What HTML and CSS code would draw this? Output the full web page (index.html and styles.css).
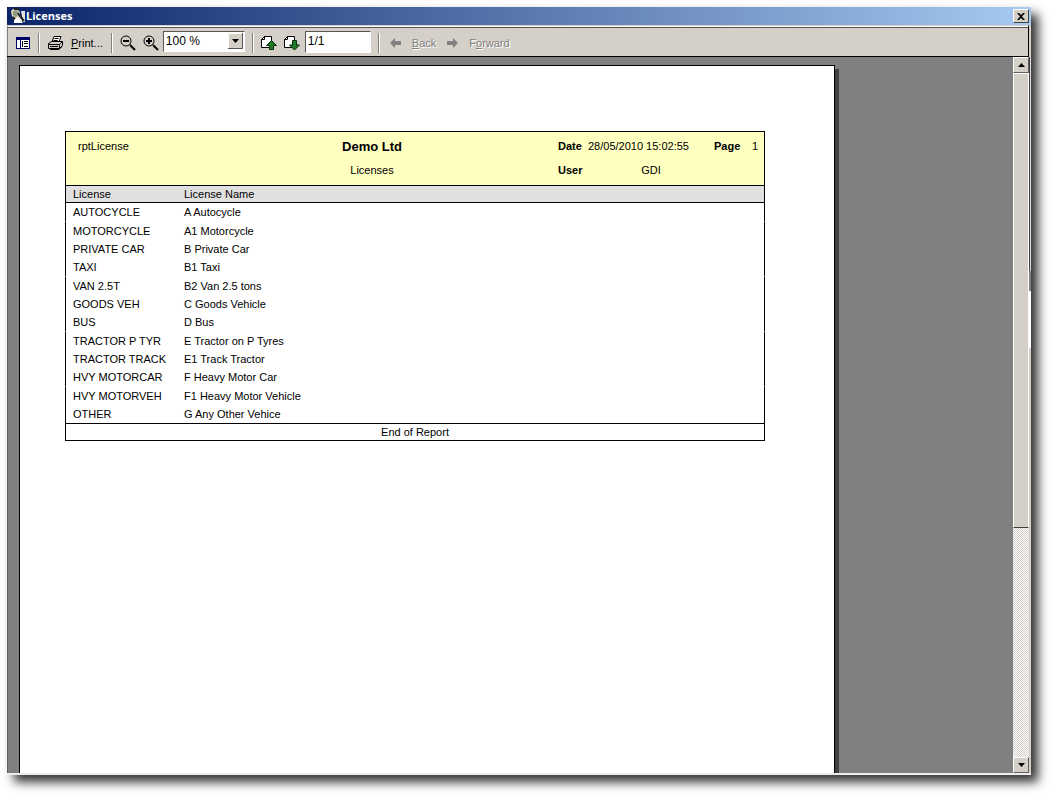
FILE: index.html
```html
<!DOCTYPE html>
<html lang="en">
<head>
<meta charset="utf-8">
<title>Licenses</title>
<link rel="stylesheet" href="styles.css">
</head>
<body>
<main class="window">
  <header class="titlebar">
    <svg class="app-icon" width="16" height="16" viewBox="0 0 16 16"><path d="M1 4q0-2 2-3h4l3 3v3H8l4 5v3H4v-4L2 8z" fill="#d9d6b5"/><path d="M3 3l4-1 2 4-3 3-3-2z" fill="#8f9a80"/><path d="M11 3h4v11h-2z" fill="#e4e4dc"/><path d="M5 10h4l4 5H4z" fill="#fff"/><path d="M4 1h5M8 5l6 8M3 9l2 2" stroke="#222" stroke-width="2"/></svg>
    <h1 class="title">Licenses</h1>
    <button class="close" aria-label="Close"><svg width="8" height="7" viewBox="0 0 8 7"><path d="M0 0h2l2 2 2-2h2L5 3.500 8 7H6L4 5 2 7H0l3-3.500z"/></svg></button>
  </header>
  <div class="toolbar">
    <button class="tool tree" aria-label="Toggle group tree"><svg width="14" height="12" viewBox="0 0 14 12"><path fill="#000066" d="M0 0h14v12H0z"/><path fill="#fff" d="M1 3h3v8H1zM5 3h8v8H5z"/><path fill="#000" d="M6 4h1v6H6zM8 4h4v1H8zM8 6h4v1H8zM8 9h4v1H8z"/></svg></button>
    <span class="sep"></span>
    <button class="tool print"><svg width="17" height="14" viewBox="0 0 17 14" fill="none" stroke="#000"><path d="M5 6l2-5.500h7L12 6M7.500 2.500h4M6.500 4.500h4" fill="#fff"/><path d="M1.500 7.500l3-2h11v4l-3 3h-11z" fill="#d4d0c8"/><path d="M1.500 8.500h11v4M12.500 8.500l3-3M3 10.500h8M3 13.500h9l3-3" /></svg><span><u>P</u>rint...</span></button>
    <span class="sep"></span>
    <button class="tool" aria-label="Zoom out"><svg width="16" height="16" viewBox="0 0 16 16" fill="none" stroke="#000"><circle cx="6" cy="6" r="5"/><path d="M3 6h6" stroke-width="2"/><path d="M10 10l5 5" stroke-width="2"/></svg></button>
    <button class="tool zoom-in" aria-label="Zoom in"><svg width="16" height="16" viewBox="0 0 16 16" fill="none" stroke="#000"><circle cx="6" cy="6" r="5"/><path d="M3 6h6M6 3v6" stroke-width="2"/><path d="M10 10l5 5" stroke-width="2"/></svg></button>
    <span class="zoom-box"><select class="zoom-select" aria-label="Zoom"><option>100 %</option></select><svg class="drop" width="15" height="16" viewBox="0 0 15 16"><path fill="#d4d0c8" d="M0 0h15v16H0z"/><path fill="none" stroke="#fff" d="M.5 15V.5H14"/><path fill="none" stroke="#555" d="M14.500 0v15.500H0"/><path d="M4 6h7L7.500 10z"/></svg></span>
    <span class="sep sep-wide"></span>
    <button class="tool" aria-label="Previous page"><svg width="16" height="16" viewBox="0 0 16 16"><path d="M3.500 1.500h7v11h-10v-8z" fill="#fff" stroke="#000"/><path d="M3.500 1.500v3h-3" fill="none" stroke="#000"/><path d="M10.500 5.500l5 5h-3v4h-4v-4h-3z" fill="#1e7a28" stroke="#062f0a"/></svg></button>
    <button class="tool next" aria-label="Next page"><svg width="16" height="16" viewBox="0 0 16 16"><path d="M3.500 1.500h7v11h-10v-8z" fill="#fff" stroke="#000"/><path d="M3.500 1.500v3h-3" fill="none" stroke="#000"/><path d="M10.500 15l5-5h-3V5.500h-4V10h-3z" fill="#1e7a28" stroke="#062f0a"/></svg></button>
    <input class="page-input" aria-label="Page" value="1/1">
    <span class="sep sep-nav"></span>
    <button class="tool nav" disabled><svg width="11" height="10" viewBox="0 0 11 10"><path d="M0 5l5-5v3h6v4H5v3z"/></svg><span><u>B</u>ack</span></button>
    <button class="tool nav" disabled><svg width="11" height="10" viewBox="0 0 11 10"><path d="M11 5L6 0v3H0v4h6v3z"/></svg><span>F<u>o</u>rward</span></button>
  </div>
  <div class="viewer">
    <div class="canvas">
      <article class="sheet">
        <section class="report">
          <header class="report-head">
            <span class="name">rptLicense</span>
            <h2 class="company">Demo Ltd</h2>
            <b>Date</b><span>28/05/2010 15:02:55</span>
            <b class="page-label">Page</b><span>1</span>
            <span class="subtitle">Licenses</span>
            <b class="user-label">User</b><span class="user">GDI</span>
          </header>
          <table class="licenses">
            <thead><tr><th>License</th><th>License Name</th></tr></thead>
            <tbody>
              <tr><td>AUTOCYCLE</td><td>A Autocycle</td></tr>
              <tr><td>MOTORCYCLE</td><td>A1 Motorcycle</td></tr>
              <tr><td>PRIVATE CAR</td><td>B Private Car</td></tr>
              <tr><td>TAXI</td><td>B1 Taxi</td></tr>
              <tr><td>VAN 2.5T</td><td>B2 Van 2.5 tons</td></tr>
              <tr><td>GOODS VEH</td><td>C Goods Vehicle</td></tr>
              <tr><td>BUS</td><td>D Bus</td></tr>
              <tr><td>TRACTOR P TYR</td><td>E Tractor on P Tyres</td></tr>
              <tr><td>TRACTOR TRACK</td><td>E1 Track Tractor</td></tr>
              <tr><td>HVY MOTORCAR</td><td>F Heavy Motor Car</td></tr>
              <tr><td>HVY MOTORVEH</td><td>F1 Heavy Motor Vehicle</td></tr>
              <tr><td>OTHER</td><td>G Any Other Vehice</td></tr>
            </tbody>
          </table>
          <footer class="report-end">End of Report</footer>
        </section>
      </article>
    </div>
    <div class="scrollbar">
      <button class="arrow" aria-label="Scroll up"><svg width="7" height="4" viewBox="0 0 7 4"><path d="M0 4h7L3.500 0z"/></svg></button>
      <div class="thumb"></div>
      <div class="track"></div>
      <button class="arrow" aria-label="Scroll down"><svg width="7" height="4" viewBox="0 0 7 4"><path d="M0 0h7L3.500 4z"/></svg></button>
    </div>
    <div class="edge"><span class="edge-top"></span><span class="edge-mark"></span><span class="edge-light"></span><span class="edge-rest"></span></div>
  </div>
</main>
</body>
</html>
```
FILE: styles.css
```css
* { box-sizing: border-box; }
body {
  margin: 0;
  height: 100vh;
  padding: 7px 23px 23px 7px;
  background: #fff;
  color: #000;
  font: 11px/14px "Liberation Sans", Arial, sans-serif;
}
button {
  margin: 0;
  padding: 0;
  border: 0;
  background: none;
  color: inherit;
  font: inherit;
}
svg { display: block; flex: none; }
.window {
  display: flex;
  flex-direction: column;
  height: 100%;
  background: #d4d0c8;
  box-shadow: 7px 7px 10px rgba(0, 0, 0, 0.8);
}
.titlebar {
  display: flex;
  align-items: center;
  flex: none;
  height: 18px;
  padding: 0 2px 0 3px;
  background: linear-gradient(to right, #0a246a, #a6caf0);
}
.title {
  flex: 1;
  margin: 0;
  color: #fff;
  font: bold 11px/16px "Open Sans", sans-serif;
}
.close {
  display: flex;
  align-items: center;
  justify-content: center;
  width: 16px;
  height: 14px;
  background: #d4d0c8;
  border: 1px solid;
  border-color: #fff #404040 #404040 #fff;
}
.toolbar {
  display: flex;
  align-items: center;
  flex: none;
  height: 32px;
  margin-right: 2px;
  padding: 3px 9px 0;
  border-top: 1px solid #d4d0c8;
  border-right: 1px solid #000;
  border-bottom: 1px solid #000;
  box-shadow: inset 1px 0 #808080, inset 0 1px #fff, inset 0 2px #555;
}
.sep {
  width: 2px;
  height: 20px;
  margin: 0 7px 0 8px;
  border-left: 1px solid #808080;
  border-right: 1px solid #fff;
}
.tool { display: flex; align-items: center; }
.print { gap: 7px; }
.zoom-in { margin-left: 7px; }
.next { margin-left: 7px; }
.zoom-box {
  display: flex;
  width: 82px;
  height: 21px;
  margin: 0 0 3px 4px;
  padding-right: 1px;
  align-items: center;
  background: #fff;
  border: 1px solid;
  border-color: #555 #fff #fff #555;
}
.zoom-select {
  flex: 1;
  min-width: 0;
  padding: 0 2px;
  appearance: none;
  background: none;
  border: 0;
  color: #000;
  font: 12px/16px "Liberation Sans", Arial, sans-serif;
}
.sep-wide { margin-left: 7px; }
.page-input {
  width: 66px;
  height: 22px;
  margin: 0 0 2px 5px;
  padding: 0 2px 2px;
  background: #fff;
  border: 1px solid;
  border-color: #555 #fff #fff #555;
  border-radius: 0;
  font: 12px/16px "Liberation Sans", Arial, sans-serif;
}
.sep-nav { margin: 0 10px 0 7px; }
.nav {
  gap: 11px;
  margin-right: 11px;
  color: #808080;
  fill: #808080;
  text-shadow: 1px 1px #fff;
}
.viewer { display: flex; flex: 1; min-height: 0; border-bottom: 2px solid #eee; }
.canvas {
  flex: 1;
  min-width: 0;
  overflow: hidden;
  padding: 8px 0 0 11px;
  background: #808080;
  border-left: 1px solid #606060;
}
.sheet {
  width: 816px;
  height: 1056px;
  padding: 65px 69px 0 45px;
  background: #fff;
  border: 1px solid #000;
  box-shadow: 4px 4px #404040;
}
.report-head {
  display: grid;
  grid-template-columns: 236px 116px minmax(0, 1fr) 30px 126px 38px 12px;
  grid-template-rows: 24px 24px;
  height: 55px;
  padding: 2px 0 0 12px;
  line-height: 24px;
  background: #ffffc0;
  border: 1px solid #000;
}
.report-head b { grid-column: 4; grid-row: 1; }
.report-head span { grid-column: 5; grid-row: 1; }
.report-head .name { grid-column: 1; }
.report-head .company {
  grid-column: 2;
  grid-row: 1;
  margin: 0;
  font-size: 13px;
  line-height: 26px;
  text-align: center;
}
.report-head .page-label { grid-column: 6; }
.report-head .page-label + span { grid-column: 7; }
.report-head .subtitle { grid-column: 2; grid-row: 2; text-align: center; }
.report-head .user-label { grid-row: 2; }
.report-head .user { grid-row: 2; text-align: center; }
.licenses { width: 100%; border-spacing: 0; table-layout: fixed; }
.licenses th, .licenses td {
  height: 18px;
  padding: 2px 0 0 7px;
  text-align: left;
  vertical-align: top;
  font-weight: normal;
  line-height: 14px;
}
.licenses th:first-child { width: 112px; }
.licenses th { height: 17px; padding-top: 1px; background: #e0e0e0; border-bottom: 1px solid #000; }
.licenses th:first-child, .licenses td:first-child { border-left: 1px solid #000; }
.licenses th:last-child, .licenses td:last-child { border-right: 1px solid #000; }
.licenses tbody tr:nth-child(3n + 1) td { height: 19px; border-bottom: 1px solid #fff; }
.report-end {
  height: 18px;
  border: 1px solid #000;
  text-align: center;
  line-height: 17px;
}
.scrollbar { display: flex; flex-direction: column; flex: none; width: 16px; }
.arrow {
  display: flex;
  align-items: center;
  justify-content: center;
  flex: none;
  height: 16px;
  background: #d4d0c8;
  border: 1px solid;
  border-color: #fff #606060 #606060 #fff;
}
.thumb {
  flex: 454;
  background: #d4d0c8;
  border: 1px solid;
  border-color: #fff #fff #404040 #fff;
}
.track {
  flex: 230;
  background: repeating-conic-gradient(#d4d0c8 0 25%, #fff 0 50%) 0 0 / 2px 2px;
}
.edge { display: flex; flex-direction: column; flex: none; width: 2px; }
.edge-top { flex: 214; background: #404040; border-right: 1px solid #ddd; }
.edge-mark { flex: 20; background: #808080; }
.edge-light { flex: 57; background: #fff; }
.edge-rest { flex: 425; background: #d4d0c8; }
```
